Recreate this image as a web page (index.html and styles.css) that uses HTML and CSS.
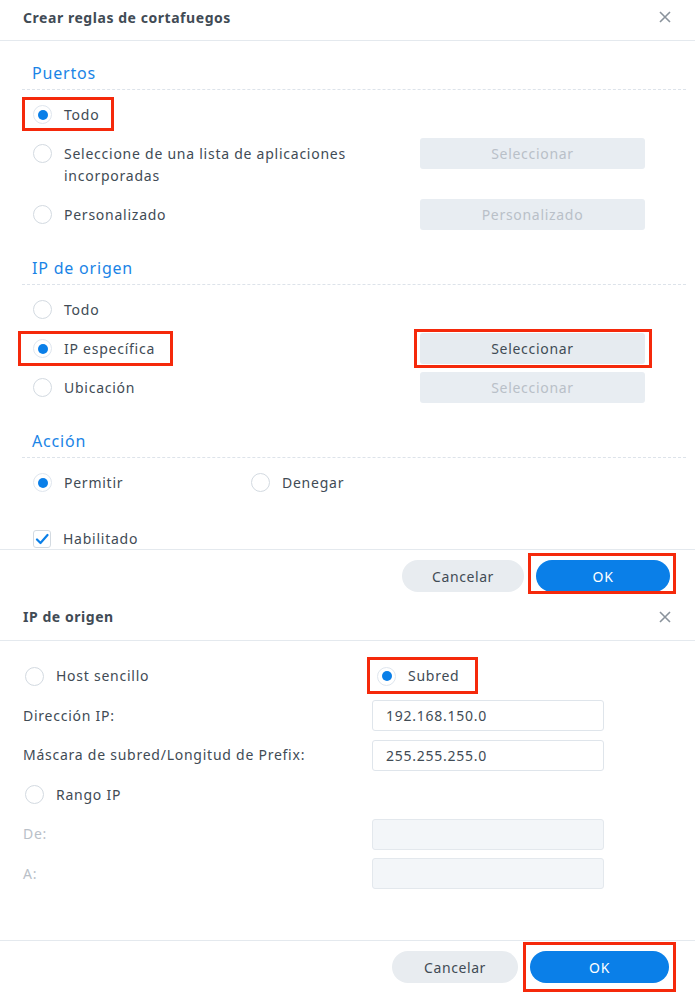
FILE: index.html
```html
<!DOCTYPE html>
<html lang="es">
<head>
<meta charset="utf-8">
<title>Crear reglas de cortafuegos</title>
<link rel="stylesheet" href="styles.css">
</head>
<body>
<div class="dialog dlg1">
  <div class="dlg-head">
    <span class="dlg-title">Crear reglas de cortafuegos</span>
    <span class="close"><svg width="12" height="12" viewBox="0 0 12 12"><path d="M1 1L11 11M11 1L1 11" stroke="#8a939c" stroke-width="1.6" fill="none"/></svg></span>
  </div>
  <div class="dlg-body1">
    <div class="section">
      <div class="sec-title">Puertos</div>
      <div class="rows">
        <div class="row">
          <label class="opt mark mark-todo"><span class="radio on"></span><span class="txt">Todo</span></label>
        </div>
        <div class="row">
          <label class="opt"><span class="radio"></span><span class="txt">Seleccione de una lista de aplicaciones incorporadas</span></label>
          <button class="btn dis">Seleccionar</button>
        </div>
        <div class="row">
          <label class="opt"><span class="radio"></span><span class="txt">Personalizado</span></label>
          <button class="btn dis">Personalizado</button>
        </div>
      </div>
    </div>
    <div class="section">
      <div class="sec-title">IP de origen</div>
      <div class="rows">
        <div class="row">
          <label class="opt"><span class="radio"></span><span class="txt">Todo</span></label>
        </div>
        <div class="row">
          <label class="opt"><span class="mark mark-ip"><span class="radio on"></span><span class="txt">IP específica</span></span></label>
          <button class="btn en mark mark-sel">Seleccionar</button>
        </div>
        <div class="row">
          <label class="opt"><span class="radio"></span><span class="txt">Ubicación</span></label>
          <button class="btn dis">Seleccionar</button>
        </div>
      </div>
    </div>
    <div class="section">
      <div class="sec-title">Acción</div>
      <div class="rows">
        <div class="row pair">
          <label class="opt"><span class="radio on"></span><span class="txt">Permitir</span></label>
          <label class="opt"><span class="radio"></span><span class="txt">Denegar</span></label>
        </div>
      </div>
    </div>
    <div class="row chk-row">
      <label class="opt"><span class="check"><svg width="14" height="12" viewBox="0 0 14 12"><path d="M2 6.5L5.5 10L12.5 2" stroke="#0a7fe8" stroke-width="2.2" fill="none" stroke-linecap="round" stroke-linejoin="round"/></svg></span><span class="txt">Habilitado</span></label>
    </div>
  </div>
  <div class="dlg-foot foot1">
    <button class="pill cancel c1">Cancelar</button>
    <button class="pill ok o1 mark mark-ok1">OK</button>
  </div>
</div>

<div class="dialog dlg2">
  <div class="dlg-head">
    <span class="dlg-title">IP de origen</span>
    <span class="close"><svg width="12" height="12" viewBox="0 0 12 12"><path d="M1 1L11 11M11 1L1 11" stroke="#8a939c" stroke-width="1.6" fill="none"/></svg></span>
  </div>
  <div class="dlg-body2">
    <div class="frow">
      <label class="opt"><span class="radio"></span><span class="txt">Host sencillo</span></label>
      <label class="opt sub"><span class="mark mark-sub"><span class="radio on"></span><span class="txt">Subred</span></span></label>
    </div>
    <div class="frow">
      <span class="flabel">Dirección IP:</span>
      <span class="input">192.168.150.0</span>
    </div>
    <div class="frow">
      <span class="flabel">Máscara de subred/Longitud de Prefix:</span>
      <span class="input">255.255.255.0</span>
    </div>
    <div class="frow">
      <label class="opt"><span class="radio"></span><span class="txt">Rango IP</span></label>
    </div>
    <div class="frow">
      <span class="flabel off">De:</span>
      <span class="input off"></span>
    </div>
    <div class="frow">
      <span class="flabel off">A:</span>
      <span class="input off"></span>
    </div>
  </div>
  <div class="dlg-foot foot2">
    <button class="pill cancel c2">Cancelar</button>
    <button class="pill ok o2 mark mark-ok2">OK</button>
  </div>
</div>
</body>
</html>
```

FILE: styles.css
```css
* { box-sizing: border-box; }
html, body { margin: 0; padding: 0; background: #fff; }
body {
  width: 695px;
  font-family: "Noto Sans", "DejaVu Sans", sans-serif;
  font-size: 14px;
  letter-spacing: 0.75px;
  color: #414b55;
}
.dialog { background: #fff; }
.dlg-head {
  height: 41px;
  display: flex;
  align-items: center;
  justify-content: space-between;
  padding: 0 24px 6px 23px;
  border-bottom: 1px solid #e4e9ee;
}
.dlg-title { font-weight: 700; font-size: 14px; letter-spacing: 0.55px; color: #414b55; }
.close { display: flex; width: 12px; height: 12px; }

.dlg-body1 {
  height: 508px;
  overflow: hidden;
  padding: 0 9px 0 22px;
}
.section { padding-bottom: 6px; }
.sec-title {
  padding: 21px 0 5px 10px;
  line-height: 22px;
  font-size: 16px;
  letter-spacing: 0.8px;
  color: #1a84e6;
  border-bottom: 1px dashed #dde3ea;
}
.rows {
  display: flex;
  flex-direction: column;
  gap: 8px;
  padding-top: 9px;
}
.row {
  display: grid;
  grid-template-columns: 1fr 225px;
  align-items: start;
  padding: 0 41px 0 11px;
}
.row.pair { grid-template-columns: 218px 1fr; }
.opt {
  display: flex;
  align-items: flex-start;
  gap: 12px;
  padding: 4.5px 0;
  line-height: 22px;
}
.opt > .mark { display: flex; align-items: flex-start; gap: 12px; }
.txt { max-width: 330px; }
.radio {
  flex: none;
  width: 19px;
  height: 19px;
  margin-top: 1.5px;
  border-radius: 50%;
  border: 1px solid #d3dae1;
  background: #fff;
  position: relative;
}
.radio.on { border-color: #dfe6ee; }
.radio.on::after {
  content: "";
  position: absolute;
  left: 3.5px; top: 3.5px;
  width: 10px; height: 10px;
  border-radius: 50%;
  background: #0a7fe8;
}
.check {
  flex: none;
  width: 18px; height: 18px;
  margin-top: 2px;
  border: 1px solid #d3dae1;
  border-radius: 3px;
  display: flex;
  align-items: center;
  justify-content: center;
}
.chk-row { margin-top: 19px; }

.btn {
  height: 31px;
  border: none;
  border-radius: 3px;
  background: #e8edf2;
  font-family: inherit;
  font-size: 14px;
  letter-spacing: 0.7px;
  padding: 0;
}
.btn.dis { color: #b9c0c8; }
.btn.en { color: #414b55; background: #e6ebf0; }

.dlg-foot {
  display: flex;
  justify-content: flex-end;
  border-top: 1px solid #e4e9ee;
}
.foot1 { height: 50px; padding: 10px 25px 0 0; gap: 12px; }
.foot2 { height: 55px; padding: 10px 26px 0 0; gap: 12px; }
.pill {
  height: 32px;
  border: none;
  border-radius: 16px;
  font-family: inherit;
  font-size: 14px;
  letter-spacing: 0.6px;
}
.cancel { background: #e8ecf0; color: #414b55; }
.ok { background: #0a7fe8; color: #fff; }
.c1 { width: 122px; }
.o1 { width: 134px; }
.c2 { width: 126px; }
.o2 { width: 139px; }

.dlg2 .dlg-head { height: 42px; padding-bottom: 6px; }
.dlg-body2 {
  height: 299px;
  padding: 19.5px 0 0 23px;
  display: flex;
  flex-direction: column;
  gap: 8.6px;
}
.frow {
  display: grid;
  grid-template-columns: 349px 232px;
  align-items: center;
  min-height: 31px;
}
.frow .opt { padding-left: 2px; }
.frow .opt.sub { padding-left: 5px; }
.flabel { line-height: 22px; }
.flabel.off { color: #b9c0c8; }
.input {
  height: 31px;
  border: 1px solid #dfe5eb;
  border-radius: 3px;
  padding: 0 13px;
  line-height: 29px;
  color: #414b55;
}
.input.off { background: #f3f6f9; border-color: #e3e8ed; }

/* red annotation frames */
.mark { position: relative; }
.mark::before {
  content: "";
  position: absolute;
  border: 3px solid #f5290b;
  pointer-events: none;
}
.mark-todo { justify-self: start; }
.mark-todo::before { left: -11px; right: -15px; top: -2px; bottom: -1px; }
.mark-ip::before { left: -15px; right: -18px; top: -7px; bottom: -6px; }
.mark-sel::before { left: -6px; right: -7px; top: -4px; bottom: -4px; }
.mark-sub::before { left: -10px; right: -19px; top: -8px; bottom: -7px; }
.mark-ok1::before { left: -8px; right: -6px; top: -7px; bottom: -2px; }
.mark-ok2::before { left: -7px; right: -7px; top: -9px; bottom: -9px; }
```
